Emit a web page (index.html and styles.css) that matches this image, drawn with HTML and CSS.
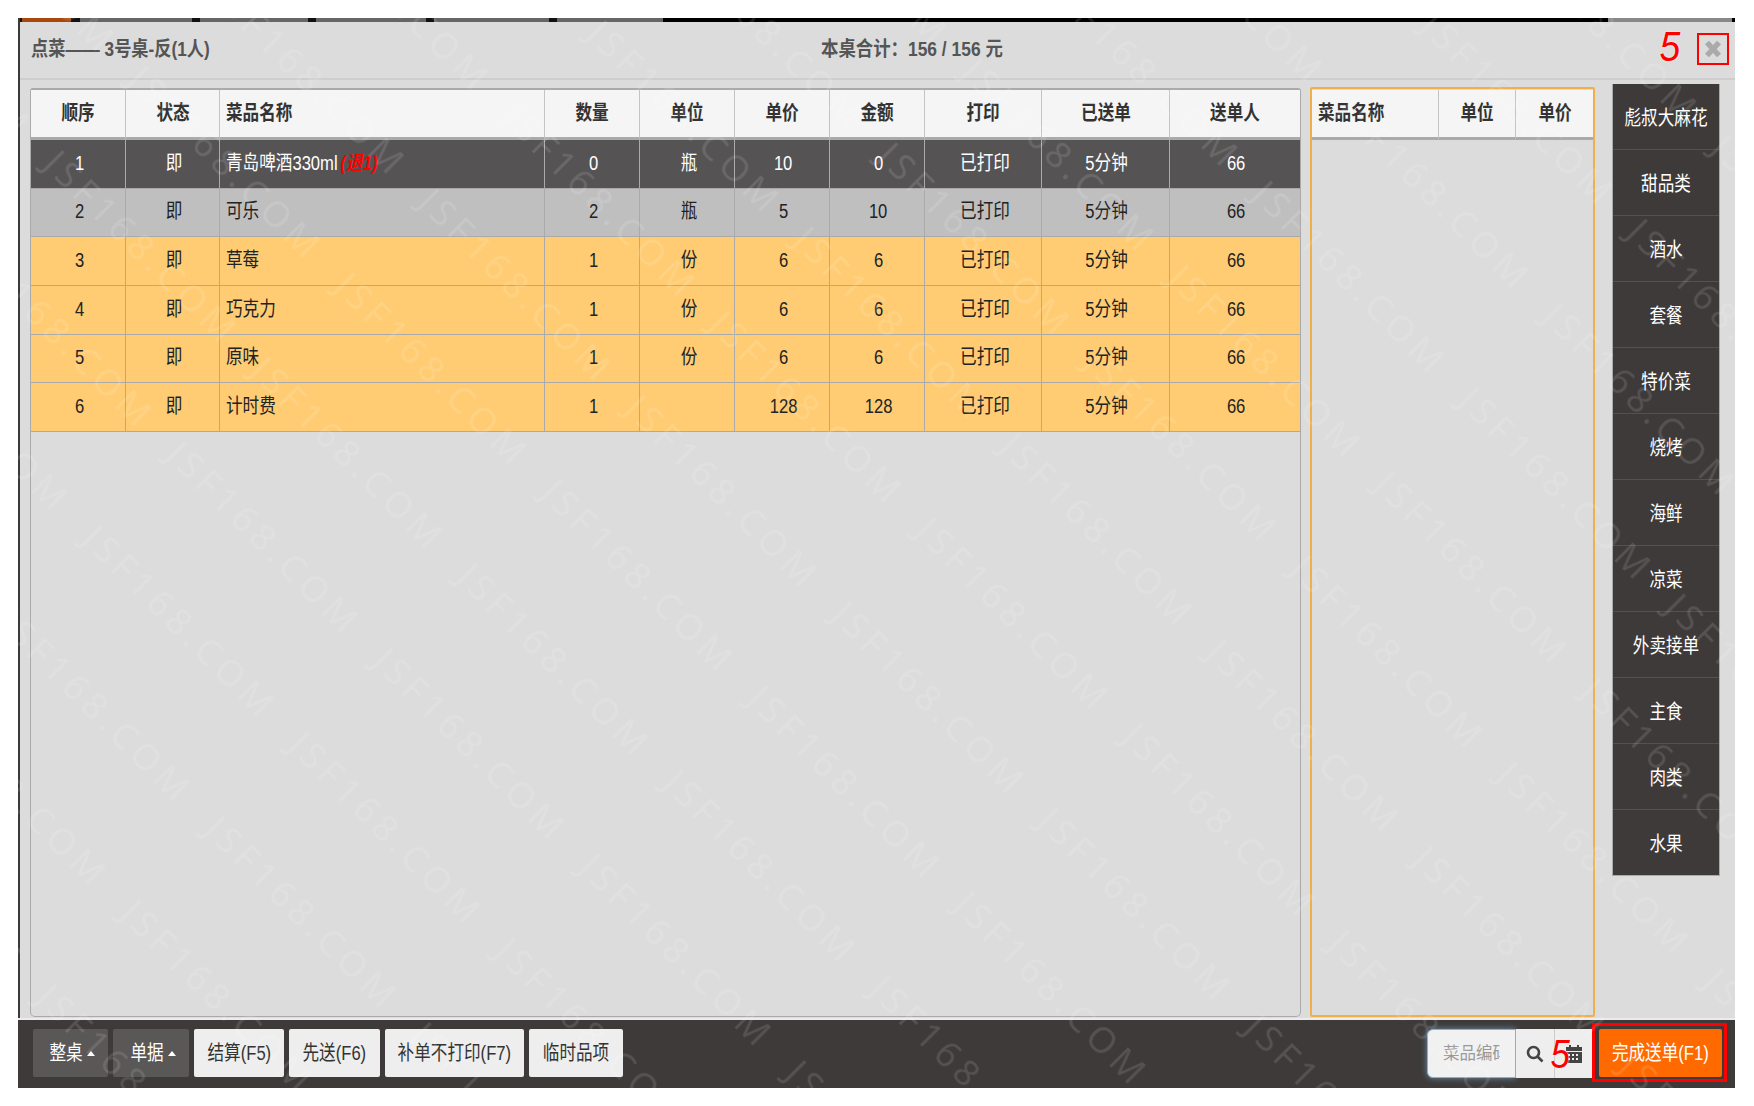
FILE: index.html
```html
<!DOCTYPE html>
<html lang="zh-CN">
<head>
    <meta charset="UTF-8">
    <title>点菜</title>
    <link rel="stylesheet" href="styles.css">
</head>
<body>
    <div class="dialog">
        <div class="strip"></div>

        <div class="dialog-head">
            <div class="title"><span class="t t-left">点菜—— 3号桌-反(1人)</span></div>
            <div class="total"><span class="t t-left">本桌合计：156 / 156 元</span></div>
            <div class="head-right">
                <span class="mark">5</span>
                <span class="close-box">
                    <svg width="18" height="20" viewBox="0 0 18 20"><path class="close-x" d="M3 3.5 L15 16.5 M15 3.5 L3 16.5"/></svg>
                </span>
            </div>
        </div>

        <div class="dialog-body">
            <div class="order-panel">
                <table class="grid">
                    <colgroup>
                        <col class="c95"><col class="c94"><col class="c325"><col class="c95"><col class="c95">
                        <col class="c95"><col class="c95"><col class="c117"><col class="c128"><col class="c130">
                    </colgroup>
                    <thead>
                        <tr>
                            <th><span class="t">顺序</span></th><th><span class="t">状态</span></th><th class="left"><span class="t t-left">菜品名称</span></th><th><span class="t">数量</span></th><th><span class="t">单位</span></th>
                            <th><span class="t">单价</span></th><th><span class="t">金额</span></th><th><span class="t">打印</span></th><th><span class="t">已送单</span></th><th><span class="t">送单人</span></th>
                        </tr>
                    </thead>
                    <tbody>
                        <tr class="row-selected">
                            <td><span class="t">1</span></td><td><span class="t">即</span></td><td class="left"><span class="t t-left">青岛啤酒330ml <em class="back">(退1)</em></span></td><td><span class="t">0</span></td><td><span class="t">瓶</span></td>
                            <td><span class="t">10</span></td><td><span class="t">0</span></td><td><span class="t">已打印</span></td><td><span class="t">5分钟</span></td><td><span class="t">66</span></td>
                        </tr>
                        <tr class="row-gray">
                            <td><span class="t">2</span></td><td><span class="t">即</span></td><td class="left"><span class="t t-left">可乐</span></td><td><span class="t">2</span></td><td><span class="t">瓶</span></td>
                            <td><span class="t">5</span></td><td><span class="t">10</span></td><td><span class="t">已打印</span></td><td><span class="t">5分钟</span></td><td><span class="t">66</span></td>
                        </tr>
                        <tr class="row-orange">
                            <td><span class="t">3</span></td><td><span class="t">即</span></td><td class="left"><span class="t t-left">草莓</span></td><td><span class="t">1</span></td><td><span class="t">份</span></td>
                            <td><span class="t">6</span></td><td><span class="t">6</span></td><td><span class="t">已打印</span></td><td><span class="t">5分钟</span></td><td><span class="t">66</span></td>
                        </tr>
                        <tr class="row-orange">
                            <td><span class="t">4</span></td><td><span class="t">即</span></td><td class="left"><span class="t t-left">巧克力</span></td><td><span class="t">1</span></td><td><span class="t">份</span></td>
                            <td><span class="t">6</span></td><td><span class="t">6</span></td><td><span class="t">已打印</span></td><td><span class="t">5分钟</span></td><td><span class="t">66</span></td>
                        </tr>
                        <tr class="row-orange">
                            <td><span class="t">5</span></td><td><span class="t">即</span></td><td class="left"><span class="t t-left">原味</span></td><td><span class="t">1</span></td><td><span class="t">份</span></td>
                            <td><span class="t">6</span></td><td><span class="t">6</span></td><td><span class="t">已打印</span></td><td><span class="t">5分钟</span></td><td><span class="t">66</span></td>
                        </tr>
                        <tr class="row-orange">
                            <td><span class="t">6</span></td><td><span class="t">即</span></td><td class="left"><span class="t t-left">计时费</span></td><td><span class="t">1</span></td><td></td>
                            <td><span class="t">128</span></td><td><span class="t">128</span></td><td><span class="t">已打印</span></td><td><span class="t">5分钟</span></td><td><span class="t">66</span></td>
                        </tr>
                    </tbody>
                </table>
            </div>

            <div class="dish-panel">
                <table class="grid">
                    <colgroup><col class="c127"><col class="c77"><col class="c77"></colgroup>
                    <thead>
                        <tr><th class="left"><span class="t t-left">菜品名称</span></th><th><span class="t">单位</span></th><th><span class="t">单价</span></th></tr>
                    </thead>
                </table>
            </div>

            <ul class="category">
                <li><span class="t">彪叔大麻花</span></li>
                <li><span class="t">甜品类</span></li>
                <li><span class="t">酒水</span></li>
                <li><span class="t">套餐</span></li>
                <li><span class="t">特价菜</span></li>
                <li><span class="t">烧烤</span></li>
                <li><span class="t">海鲜</span></li>
                <li><span class="t">凉菜</span></li>
                <li><span class="t">外卖接单</span></li>
                <li><span class="t">主食</span></li>
                <li><span class="t">肉类</span></li>
                <li><span class="t">水果</span></li>
            </ul>
        </div>

        <div class="dialog-foot">
            <button class="btn btn-dark w75"><span class="t">整桌</span><span class="caret"></span></button>
            <button class="btn btn-dark w76"><span class="t">单据</span><span class="caret"></span></button>
            <button class="btn w90"><span class="t">结算(F5)</span></button>
            <button class="btn w91"><span class="t">先送(F6)</span></button>
            <button class="btn w139"><span class="t">补单不打印(F7)</span></button>
            <button class="btn w94"><span class="t">临时品项</span></button>

            <div class="search">
                <input class="search-input" type="text" placeholder="菜品编码">
                <span class="addon">
                    <svg width="20" height="20" viewBox="0 0 20 20"><circle class="icon-line" cx="8.5" cy="8.5" r="5.5"/><path class="icon-line" d="M12.5 12.5 L17.5 17.5"/></svg>
                </span>
                <span class="addon">
                    <svg width="18" height="20" viewBox="0 0 18 20">
                        <path class="icon-fill" d="M1 3h3V1h2v2h6V1h2v2h3v4H1z"/>
                        <path class="icon-fill" d="M1 8h16v11H1z M3 10v2h2v-2z M7 10v2h2v-2z M11 10v2h2v-2z M3 14v2h2v-2z M7 14v2h2v-2z M11 14v2h2v-2z"/>
                    </svg>
                </span>
                <span class="mark mark-search">5</span>
            </div>

            <div class="done-box">
                <button class="btn btn-done"><span class="t">完成送单(F1)</span></button>
            </div>
        </div>
    </div>

    <!-- watermark over the whole shot -->
    <svg class="watermark" width="1754" height="1106">
        <defs>
            <pattern id="wm" width="292" height="119" patternUnits="userSpaceOnUse" patternTransform="rotate(45) translate(137 0)">
                <text class="wm-text" x="10" y="88">JSF168.COM</text>
            </pattern>
        </defs>
        <rect width="1754" height="1106" fill="url(#wm)"/>
    </svg>
</body>
</html>
```

FILE: styles.css
```css
html, body {
    margin: 0;
    padding: 0;
    background: #fff;
}
body {
    width: 1754px;
    height: 1106px;
    overflow: hidden;
    position: relative;
    font-family: "Liberation Sans", "Noto Sans CJK SC", sans-serif;
    font-size: 20px;
    line-height: 24px;
    color: #222;
}
/* the shot is squeezed sideways, so all text is narrowed a bit */
.t {
    display: inline-block;
    white-space: nowrap;
    transform: scaleX(.83);
}
.t-left {
    transform-origin: left center;
}
.dialog {
    width: 1717px;
    height: 1070px;
    margin: 18px 0 0 18px;
    display: flex;
    flex-direction: column;
    background: #dcdcdc;
    box-sizing: border-box;
    border-left: 2px solid #3a3a3a;
}
.strip {
    height: 4px;
    flex: none;
    background: linear-gradient(to right,
        #111 0, #111 2px,
        #a8480c 2px, #a8480c 51px,
        #111 51px, #111 60px,
        #666 60px, #666 172px,
        #111 172px, #111 180px,
        #666 180px, #666 288px,
        #111 288px, #111 296px,
        #666 296px, #666 406px,
        #111 406px, #111 414px,
        #666 414px, #666 529px,
        #111 529px, #111 537px,
        #666 537px, #666 643px,
        #000 643px, #000 1588px,
        #888 1588px, #888 1712px,
        #000 1712px);
}

/* head */
.dialog-head {
    height: 58px;
    flex: none;
    box-sizing: border-box;
    border-bottom: 2px solid #cecece;
    display: grid;
    grid-template-columns: 790px auto 1fr;
    align-items: center;
    padding: 0 6px 3px 11px;
    font-size: 20px;
    font-weight: bold;
    color: #555;
}
.title,
.total {
    white-space: nowrap;
}
.title .t {
    transform: scaleX(.86);
}
.total .t {
    transform: scaleX(.87);
}
.head-right {
    display: flex;
    align-items: center;
    justify-content: flex-end;
    gap: 15px;
}
.mark {
    display: inline-block;
    margin-bottom: 6px;
    font-size: 43px;
    line-height: 36px;
    font-weight: normal;
    font-style: italic;
    color: #f00;
    text-shadow: 0 0 2px #fff;
    transform: scaleX(.87);
}
.close-box {
    width: 32px;
    height: 32px;
    box-sizing: border-box;
    border: 2px solid #f00;
    display: flex;
    align-items: center;
    justify-content: center;
}
.close-x {
    stroke: #aaa;
    stroke-width: 5.5;
    fill: none;
}

/* body */
.dialog-body {
    flex: 1;
    min-height: 0;
    display: flex;
    align-items: flex-start;
}
.order-panel {
    width: 1271px;
    height: 929px;
    margin: 8px 0 0 10px;
    box-sizing: border-box;
    border: 1px solid #aaa;
    border-top-width: 2px;
    border-radius: 3px 3px 5px 5px;
    flex: none;
}
.dish-panel {
    width: 285px;
    height: 930px;
    margin: 7px 0 0 9px;
    padding: 1px 2px 0 0;
    box-sizing: border-box;
    border: 2px solid #efb04a;
    border-radius: 2px;
    flex: none;
}
.category {
    width: 108px;
    margin: 4px 0 0 17px;
    padding: 0;
    list-style: none;
    flex: none;
    background: #3e3a39;
    box-sizing: border-box;
    border: 1px solid #aaa;
    border-width: 0 1px 1px 1px;
}
.category li {
    height: 66px;
    padding-top: 2px;
    box-sizing: border-box;
    border-bottom: 1px solid #55514f;
    display: flex;
    align-items: center;
    justify-content: center;
    color: #fff;
}
.category li:last-child {
    border-bottom: none;
    height: 65px;
}

/* tables */
.grid {
    border-collapse: separate;
    border-spacing: 0;
    table-layout: fixed;
    width: 100%;
}
.c77 { width: 77px; }
.c94 { width: 94px; }
.c95 { width: 95px; }
.c117 { width: 117px; }
.c127 { width: 127px; }
.c128 { width: 128px; }
.c130 { width: 130px; }
.c325 { width: 325px; }
.grid th {
    height: 50px;
    box-sizing: border-box;
    padding: 0 6px 1px;
    background: #f5f5f5;
    border-right: 1px solid #c4c4c4;
    border-bottom: 3px solid #aaa;
    font-weight: bold;
    color: #333;
    text-align: center;
}
.grid td {
    height: 48.67px;
    box-sizing: border-box;
    padding: 0 5px 2px 8px;
    border-right: 1px solid #aaa;
    border-bottom: 1px solid #aaa;
    text-align: center;
}
.grid th:last-child,
.grid td:last-child {
    border-right: none;
}
.grid .left {
    padding-left: 6px;
    text-align: left;
}
.row-selected td {
    background: #555354;
    color: #fff;
}
.row-gray td {
    background: #bfbfbf;
}
.row-orange td {
    background: #ffcc73;
}
.back {
    color: #f00;
    font-weight: bold;
    margin-left: -2px;
}

/* foot */
.dialog-foot {
    height: 68px;
    flex: none;
    box-sizing: border-box;
    background: #3e3a39;
    box-shadow: 0 -2px 0 #ececec;
    margin-left: -2px;
    padding: 9px 8px 0 15px;
    display: flex;
    align-items: flex-start;
    gap: 5px;
    position: relative;
}
.btn {
    height: 48px;
    padding: 0;
    border: none;
    border-radius: 2px;
    background: #eee;
    color: #333;
    font-family: inherit;
    font-size: 20px;
    line-height: 24px;
    flex: none;
    white-space: nowrap;
}
.w75 { width: 75px; }
.w76 { width: 76px; }
.w90 { width: 90px; }
.w91 { width: 91px; }
.w94 { width: 94px; }
.w139 { width: 139px; }
.btn-dark {
    background: #5a5757;
    color: #fff;
}
.caret {
    display: inline-block;
    margin-left: 1px;
    vertical-align: 4px;
    border-left: 4px solid transparent;
    border-right: 4px solid transparent;
    border-bottom: 5px solid #fff;
}
.search {
    margin-left: auto;
    position: relative;
    display: flex;
    height: 49px;
}
.search-input {
    width: 89px;
    height: 49px;
    box-sizing: border-box;
    padding: 0 15px;
    border: 1px solid #7ab3e0;
    border-radius: 6px 0 0 6px;
    background: #f1f1f1;
    box-shadow: 0 0 6px rgba(122, 179, 224, .7);
    font-family: inherit;
    font-size: 16.5px;
    outline: none;
}
.search-input::placeholder {
    color: #999;
    opacity: 1;
}
.addon {
    width: 39px;
    box-sizing: border-box;
    background: #eee;
    border-right: 1px solid #ccc;
    display: flex;
    align-items: center;
    justify-content: center;
}
.addon:last-of-type {
    border-right: none;
    justify-content: flex-end;
    padding-right: 10px;
}
.icon-line {
    fill: none;
    stroke: #444;
    stroke-width: 2.6;
}
.icon-fill {
    fill: #444;
    fill-rule: evenodd;
}
.mark-search {
    position: absolute;
    left: 122px;
    top: 7px;
    margin: 0;
    font-size: 40px;
}
.done-box {
    margin: -6px 0 0 -7px;
    padding: 3px 2px 2px 4px;
    border: 3px solid #f00;
    position: relative;
}
.btn-done {
    display: block;
    width: 123px;
    background: #ff6a00;
    color: #fff;
}

.watermark {
    position: absolute;
    left: 0;
    top: 0;
    pointer-events: none;
}
.wm-text {
    font-family: "Open Sans", sans-serif;
    font-size: 36px;
    letter-spacing: 5.5px;
    fill: rgba(255, 255, 255, .12);
}
```
